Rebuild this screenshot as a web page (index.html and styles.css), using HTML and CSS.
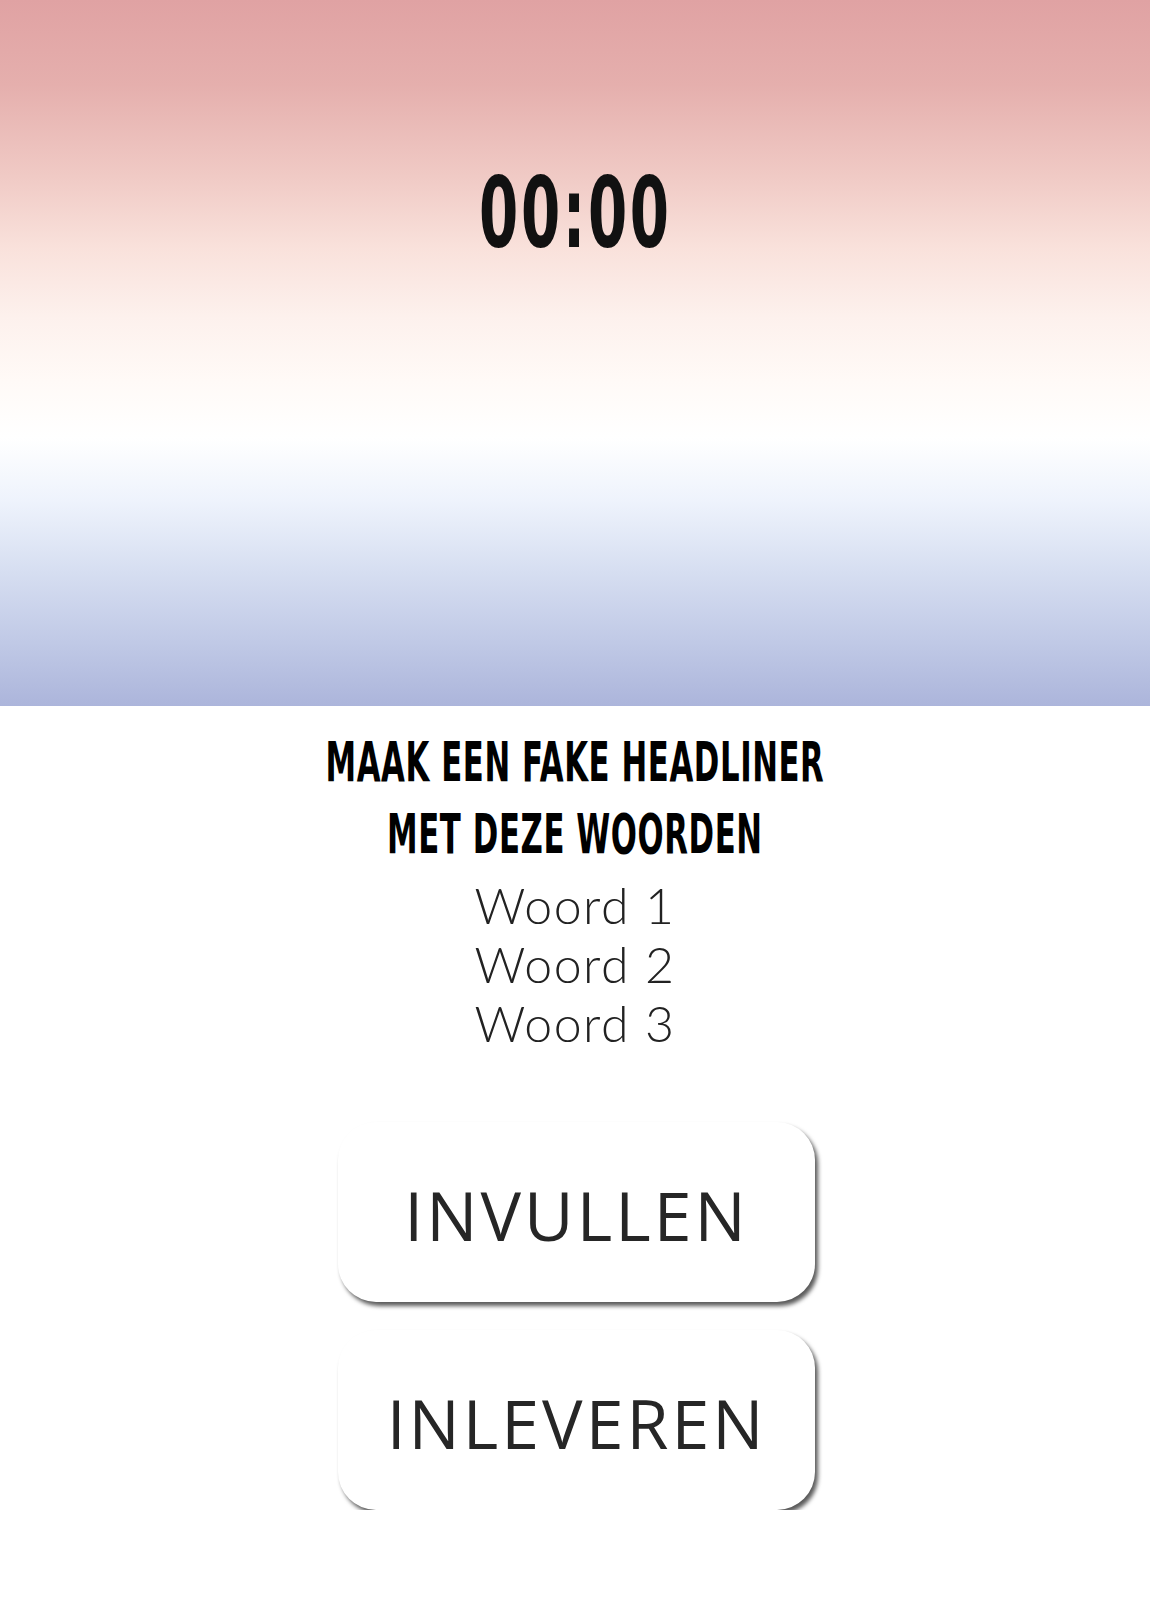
FILE: index.html
```html
<!DOCTYPE html>
<html lang="nl">
<head>
<meta charset="utf-8">
<title>Fake headliner</title>
<link rel="stylesheet" href="styles.css">
</head>
<body>
<header class="hero">
  <div class="timer"><span class="squeeze timer-text">00:00</span></div>
</header>
<main class="content">
  <h1 class="title">
    <span class="squeeze title-text">MAAK EEN FAKE HEADLINER</span>
    <span class="squeeze title-text">MET DEZE WOORDEN</span>
  </h1>
  <ul class="words">
    <li>Woord 1</li>
    <li>Woord 2</li>
    <li>Woord 3</li>
  </ul>
  <div class="actions">
    <button class="btn" type="button">INVULLEN</button>
    <button class="btn" type="button">INLEVEREN</button>
  </div>
</main>
</body>
</html>
```
FILE: styles.css
```css
html, body {
  margin: 0;
  padding: 0;
  background: #ffffff;
}
body {
  font-family: "Liberation Sans", Arial, sans-serif;
  color: #111;
}
.hero {
  height: 706px;
  box-sizing: border-box;
  padding-top: 163px;
  background: linear-gradient(180deg,
    #e0a2a3 0%,
    #e5afad 12%,
    #f0cac5 25%,
    #f9e1db 35%,
    #fdf1ed 45%,
    #fffaf7 54%,
    #ffffff 62%,
    #eef3fc 71%,
    #d6def1 81%,
    #c0c9e6 91%,
    #acb5db 100%);
  display: flex;
  justify-content: center;
}
.timer {
  font-family: "DejaVu Sans Condensed", "Liberation Sans", sans-serif;
  font-weight: 700;
  font-size: 98px;
  line-height: 100px;
  color: #111111;
  letter-spacing: 4px;
}
.squeeze {
  display: inline-block;
  white-space: nowrap;
}
.timer-text {
  transform: scaleX(0.64);
}
.title-text {
  transform: scaleX(0.61);
}
.content {
  display: flex;
  flex-direction: column;
  align-items: center;
}
.title {
  margin: 20px 0 0;
  display: flex;
  flex-direction: column;
  align-items: center;
  font-family: "DejaVu Sans Condensed", "Liberation Sans", sans-serif;
  font-weight: 700;
  font-size: 56px;
  line-height: 72px;
  letter-spacing: 1px;
  color: #000;
}
.words {
  list-style: none;
  margin: 6px 0 0;
  padding: 0;
  text-align: center;
  font-family: Lato, "Open Sans", sans-serif;
  font-weight: 300;
  font-size: 50px;
  line-height: 59px;
  color: #222;
  letter-spacing: 1.5px;
}
.actions {
  margin-top: 69px;
  display: flex;
  flex-direction: column;
  gap: 28px;
  align-items: center;
}
.btn {
  width: 477px;
  height: 180px;
  margin-left: 3px;
  border: none;
  border-radius: 38px;
  background: #ffffff;
  box-shadow: 3px 4px 4px rgba(0, 0, 0, 0.65);
  font-family: "Open Sans", sans-serif;
  font-weight: 400;
  font-size: 68px;
  letter-spacing: 3px;
  color: #262626;
  padding: 4px 0 0;
  cursor: pointer;
}
```
